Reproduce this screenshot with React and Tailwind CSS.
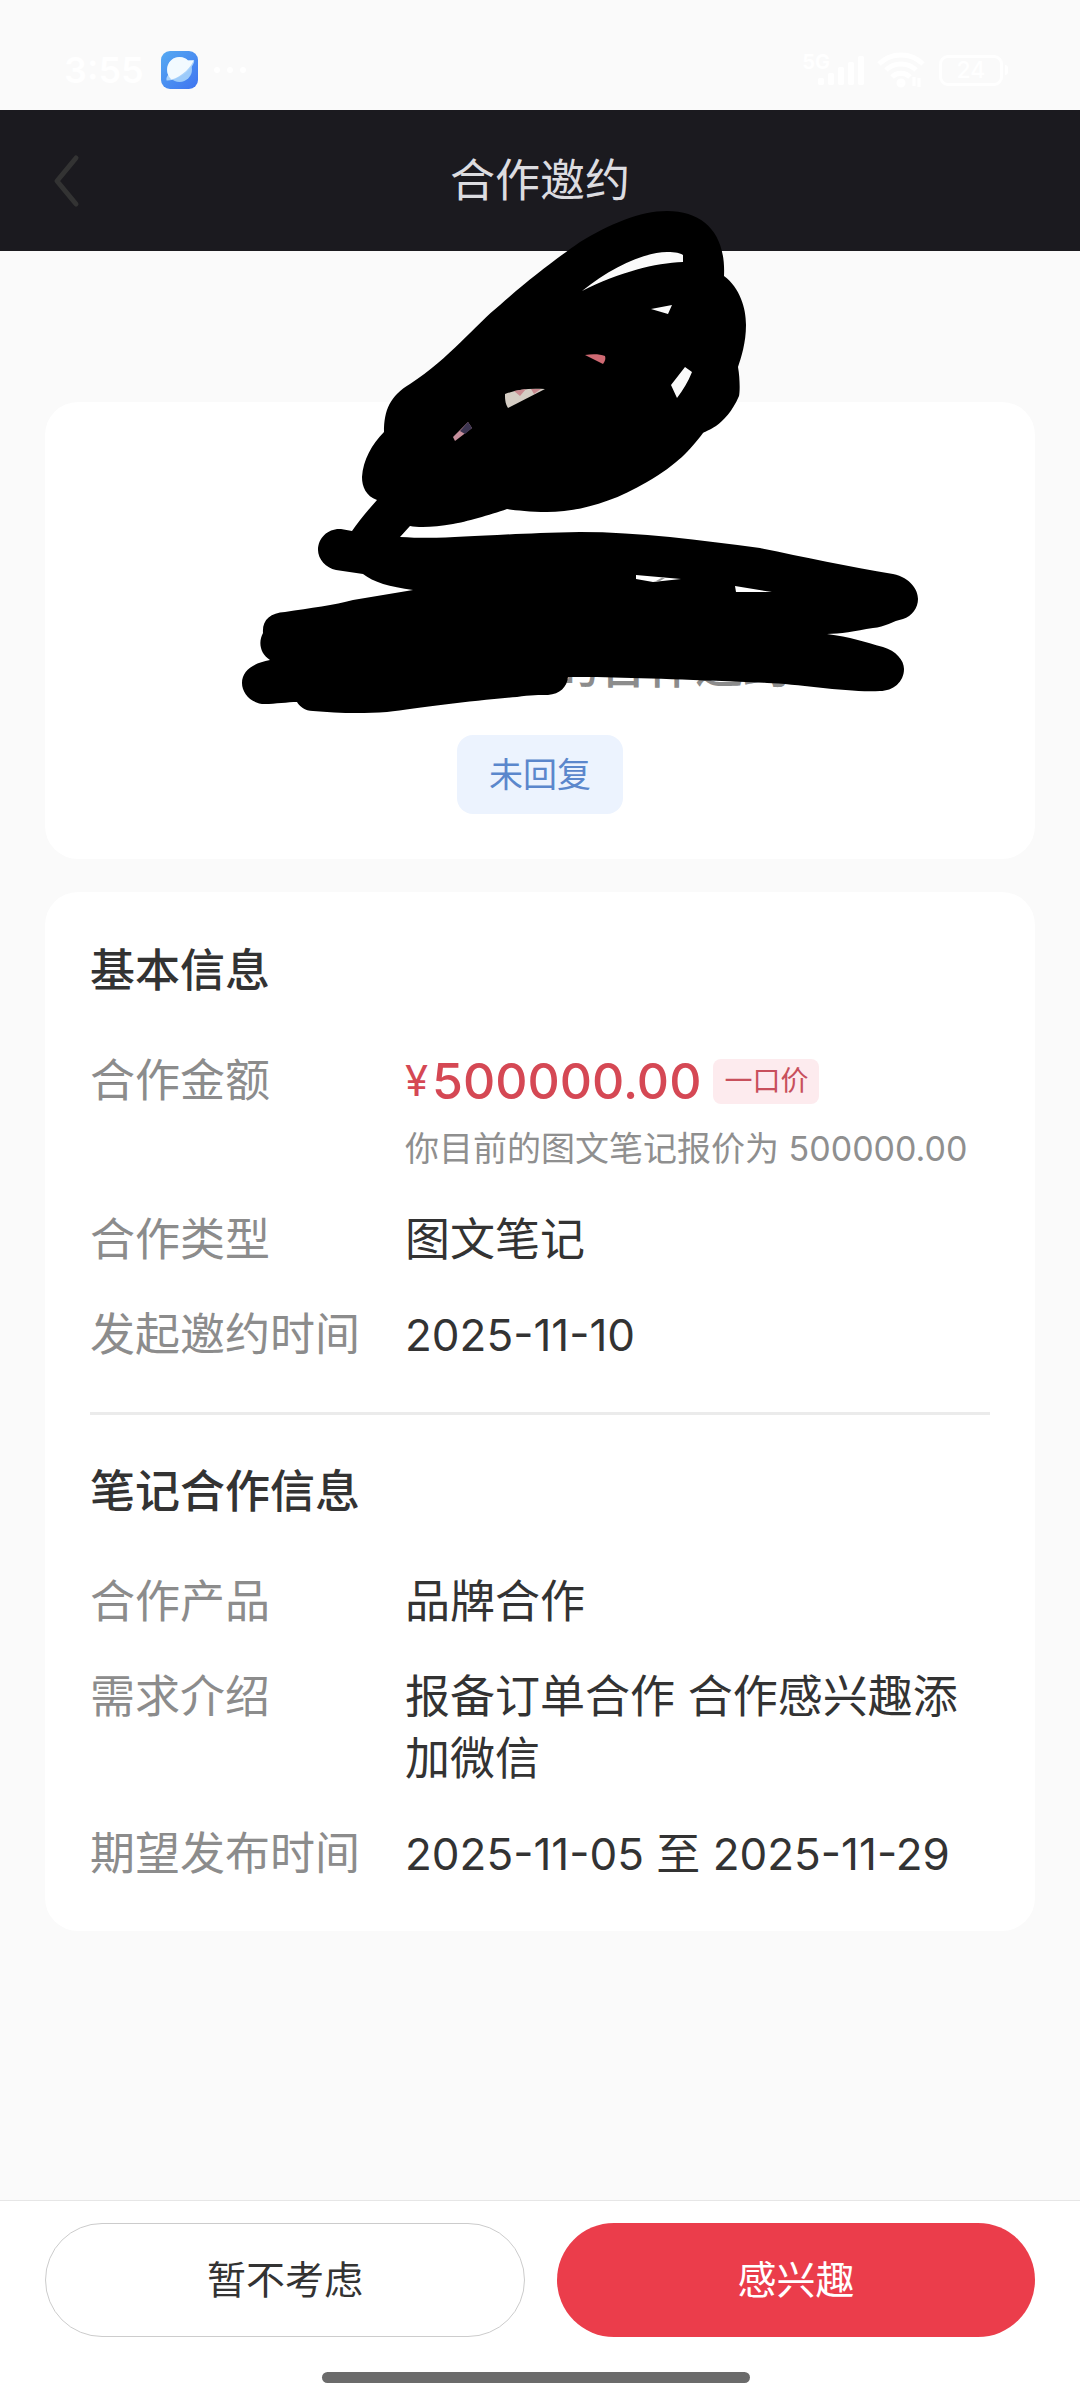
import React from 'react';

const StatusBar = () => {
    return (
        <div className="flex justify-between items-center h-[110px] pt-[30px] pl-16 pr-[72px] text-white">
            <div className="flex items-center">
                <span className="w-[78px] text-[36px] leading-none font-semibold">3:55</span>
                <svg className="ml-[19px] w-[37px] h-[38px]" viewBox="0 0 37 38" fill="none">
                    <defs>
                        <linearGradient id="planetBg" x1="0" y1="0" x2="37" y2="38" gradientUnits="userSpaceOnUse">
                            <stop stopColor="#56aaf2" />
                            <stop offset="1" stopColor="#3f74f0" />
                        </linearGradient>
                    </defs>
                    <rect width="37" height="38" rx="9" fill="url(#planetBg)" />
                    <circle cx="18.5" cy="18.5" r="12.5" fill="#9ccbfa" />
                    <path d="M26 9.5L33 9C34 12 30 17 27 20C22 25 12 30 5.500 29.500C5 27 6 25 8 23Z" fill="#a9d2fb" />
                    <path d="M10.500 28.500C2.500 21 6 6.500 18.500 6C22 6 25 7.500 27 9.500L32.500 9.500C31 15 21 26 10.500 28.500Z" fill="#f2faff" />
                </svg>
                <span className="flex gap-[7px] ml-[16px]">
                    <i className="size-[6px] rounded-full bg-white"></i>
                    <i className="size-[6px] rounded-full bg-white"></i>
                    <i className="size-[6px] rounded-full bg-white"></i>
                </span>
            </div>

            <div className="flex items-center">
                <span className="self-start text-[20px] leading-none font-bold">5G</span>
                <svg className="-ml-3 w-[47px] h-[32px]" viewBox="0 0 47 32" fill="white">
                    <rect x="0" y="24" width="6" height="7" rx="2" />
                    <rect x="10" y="19" width="6" height="12" rx="2" />
                    <rect x="20" y="13" width="6" height="18" rx="2" />
                    <rect x="30" y="8" width="6" height="23" rx="2" />
                    <rect x="40" y="2" width="6" height="29" rx="2" />
                </svg>
                <svg className="ml-3 w-[48px] h-[36px]" viewBox="0 0 48 36" fill="none" stroke="white" strokeWidth="5">
                    <path d="M2 12C14 0 34 0 46 12" />
                    <path d="M9 18C17 10 31 10 39 18" />
                    <path d="M15 25C20 20 28 20 33 25" />
                    <circle cx="24" cy="31" r="2" />
                    <path d="M37 25V34M42 26V35" strokeWidth="3" />
                </svg>
                <span className="ml-[14px] flex items-center justify-center w-[64px] h-[31px] rounded-[9px] border-[3px] border-white text-[23px] leading-none font-medium">
                    24
                </span>
                <i className="ml-[2px] w-[3px] h-[10px] rounded-r bg-white"></i>
            </div>
        </div>
    );
};

const Header = () => {
    return (
        <header className="grid grid-cols-[1fr_auto_1fr] items-center h-[141px] px-[51px] bg-[#1b1a1f]">
            <button type="button" aria-label="返回" className="justify-self-start">
                <svg className="w-[30px] h-[54px]" viewBox="0 0 30 54" fill="none" stroke="#333333" strokeWidth="5" strokeLinecap="round" strokeLinejoin="round">
                    <path d="M25 4L6 27L25 50" />
                </svg>
            </button>
            <h1 className="text-[45px] leading-[62px] text-[#dcdce0]">合作邀约</h1>
        </header>
    );
};

// hand-drawn mask over the avatar and the brand name
const Scribble = () => {
    return (
        <svg className="absolute top-0 left-1/2 -translate-x-1/2 w-[1080px] h-[760px] pointer-events-none" viewBox="0 0 1080 760">
            <path
                fillRule="evenodd"
                d="M384 432C384 410 390 396 410 384C450 358 475 325 500 305C530 278 560 256 580 242C610 224 640 211 667 211C705 211 726 235 724 276C740 288 746 308 746 325C746 343 741 358 738 367C740 378 740 392 739 396C732 412 724 420 716 426C710 430 706 431 703 433C690 450 678 464 647 482C610 504 575 512 547 512C530 512 515 510 507 509C490 515 465 522 453 524C436 527 420 528 410 526L400 537C450 540 480 534 580 532C640 532 700 540 760 548C800 556 850 567 893 574C911 578 918 590 918 599C918 608 912 616 903 619C893 621 885 627 873 628C855 631 840 634 827 634C850 637 865 642 883 647C896 651 904 660 904 669C904 682 893 691 880 691C850 693 800 684 767 683C700 680 640 678 597 677L568 677C567 687 560 694 548 695C540 695 530 695 517 697C475 700 420 708 387 712C360 714 335 713 313 711C305 711 299 706 297 702C288 702 275 704 265 704C251 704 242 693 242 683C242 671 253 663 270 660C260 654 258 642 263 633C262 620 270 613 285 612C310 608 335 605 353 600L413 590C390 587 373 582 363 574L336 570C326 568 318 559 318 550C318 537 329 528 341 529L352 531C358 522 368 510 377 500C366 496 362 487 362 477C363 460 372 444 384 432Z
                M582 291C610 268 645 252 667 252C676 252 680 253 683 255L683 262C655 263 620 272 582 291Z
                M651 309L672 305L668 314Z
                M671 385L685 367L692 372C688 382 683 390 677 398Z
                M636 575L681 579L653 582L636 579Z
                M735 586L772 592L736 592Z"
            />
            <path d="M585 355C592 354 600 354 605 356C606 359 605 361 603 364Z" fill="#cf6a73" />
            <path d="M505 394C518 389 530 388 545 389L508 408C505 403 505 399 505 394Z" fill="#d5cdc4" />
            <path d="M514 391L526 389L520 396ZM531 389L541 389L534 394Z" fill="#c98a90" />
            <path d="M453 437L468 422L472 428L455 441Z" fill="#c58e9b" />
            <path d="M460 431L468 422L472 428L465 434Z" fill="#3b3450" />
            <path d="M656 581L663 577L665 578L660 581Z" fill="#999999" />
        </svg>
    );
};

const Row = ({ label, children }) => {
    return (
        <div className="flex">
            <dt className="w-[315px] shrink-0 text-[#8c8c8c]">{label}</dt>
            <dd className="flex-1 text-[#333333]">{children}</dd>
        </div>
    );
};

const Section = ({ title, children }) => {
    return (
        <section>
            <h2 className="text-[45px] leading-[62px] font-medium text-[#333333]">{title}</h2>
            <dl className="mt-12 flex flex-col gap-[33px] text-[45px] leading-[62px]">{children}</dl>
        </section>
    );
};

const App = () => {
    return (
        <div className="relative flex flex-col min-h-screen overflow-hidden bg-[#fafafa] font-['Inter','Noto_Sans_CJK_SC',sans-serif]">
            <StatusBar />
            <Header />

            <main className="px-[45px] pt-[151px] pb-8 flex flex-col gap-[33px]">
                <section className="flex flex-col items-center rounded-[33px] bg-white pt-[232px] pb-[45px]">
                    <p className="pl-[262px] text-[48px] leading-[64px] font-medium text-[#8c8c8c]">的合作邀约</p>
                    <span className="mt-[37px] rounded-2xl bg-[#ecf3fe] px-8 text-[34px] leading-[79px] text-[#5b87cc]">未回复</span>
                </section>

                <div className="rounded-[33px] bg-white px-[45px] pt-12 pb-[46px]">
                    <Section title="基本信息">
                        <Row label="合作金额">
                            <div className="flex items-center text-[#d54854]">
                                <span className="text-[42px]">¥</span>
                                <span className="ml-1 text-[50px] font-medium">500000.00</span>
                                <span className="ml-3 rounded-lg bg-[#fdebee] px-[11px] text-[28px] leading-[45px] text-[#c8505c]">一口价</span>
                            </div>
                            <p className="mt-[10px] text-[34px] leading-[54px] text-[#8f8f8f]">你目前的图文笔记报价为 500000.00</p>
                        </Row>
                        <Row label="合作类型">图文笔记</Row>
                        <Row label="发起邀约时间">
                            <span className="block text-[44px]">2025-11-10</span>
                        </Row>
                    </Section>

                    <hr className="my-[46px] border-t-[3px] border-[#ebebeb]" />

                    <Section title="笔记合作信息">
                        <Row label="合作产品">品牌合作</Row>
                        <Row label="需求介绍">报备订单合作 合作感兴趣添加微信</Row>
                        <Row label="期望发布时间">
                            <span className="block text-[44px]">2025-11-05 至 2025-11-29</span>
                        </Row>
                    </Section>
                </div>
            </main>

            <footer className="mt-auto border-t border-[#e6e6e6] bg-white px-[45px] pt-[22px] pb-[17px]">
                <div className="flex gap-8">
                    <button type="button" className="flex-1 h-[114px] rounded-full border border-[#cccccc] bg-white text-[39px] text-[#333333]">
                        暂不考虑
                    </button>
                    <button type="button" className="flex-1 h-[114px] rounded-full bg-[#eb3d4b] text-[39px] text-white">
                        感兴趣
                    </button>
                </div>
                <div className="mt-[35px] pr-2 flex justify-center">
                    <i className="w-[428px] h-[11px] rounded-full bg-[#6b6b6b]"></i>
                </div>
            </footer>

            <Scribble />
        </div>
    );
};

export default App;
